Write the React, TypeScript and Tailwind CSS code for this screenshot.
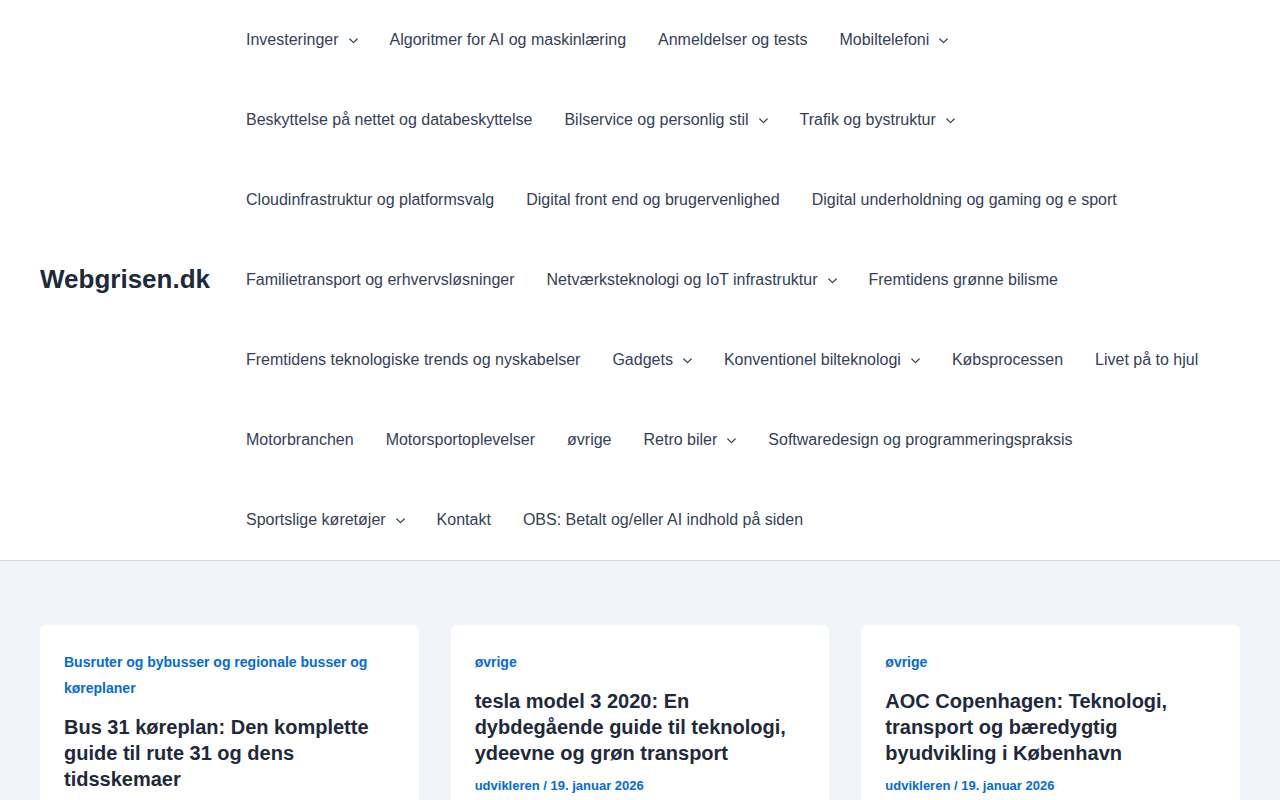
const NAV = [
  { label: 'Investeringer', sub: true },
  { label: 'Algoritmer for AI og maskinlæring' },
  { label: 'Anmeldelser og tests' },
  { label: 'Mobiltelefoni', sub: true },
  { label: 'Beskyttelse på nettet og databeskyttelse' },
  { label: 'Bilservice og personlig stil', sub: true },
  { label: 'Trafik og bystruktur', sub: true },
  { label: 'Cloudinfrastruktur og platformsvalg' },
  { label: 'Digital front end og brugervenlighed' },
  { label: 'Digital underholdning og gaming og e sport' },
  { label: 'Familietransport og erhvervsløsninger' },
  { label: 'Netværksteknologi og IoT infrastruktur', sub: true },
  { label: 'Fremtidens grønne bilisme' },
  { label: 'Fremtidens teknologiske trends og nyskabelser' },
  { label: 'Gadgets', sub: true },
  { label: 'Konventionel bilteknologi', sub: true },
  { label: 'Købsprocessen' },
  { label: 'Livet på to hjul' },
  { label: 'Motorbranchen' },
  { label: 'Motorsportoplevelser' },
  { label: 'øvrige' },
  { label: 'Retro biler', sub: true },
  { label: 'Softwaredesign og programmeringspraksis' },
  { label: 'Sportslige køretøjer', sub: true },
  { label: 'Kontakt' },
  { label: 'OBS: Betalt og/eller AI indhold på siden' },
]

const POSTS = [
  {
    cat: 'Busruter og bybusser og regionale busser og køreplaner',
    title: 'Bus 31 køreplan: Den komplette guide til rute 31 og dens tidsskemaer',
  },
  {
    cat: 'øvrige',
    title: 'tesla model 3 2020: En dybdegående guide til teknologi, ydeevne og grøn transport',
  },
  {
    cat: 'øvrige',
    title: 'AOC Copenhagen: Teknologi, transport og bæredygtig byudvikling i København',
  },
]

function Chevron() {
  return (
    <svg width="9" height="6" viewBox="0 0 9 6" className="ml-[10px] mt-[1px]" fill="none">
      <path d="M0.8 1l3.7 3.7L8.2 1" stroke="#334155" strokeWidth="1.2" strokeLinecap="round" strokeLinejoin="round" />
    </svg>
  )
}

export default function App() {
  return (
    <div className="min-h-screen bg-[#f0f5fa] font-['Liberation_Sans',Arial,sans-serif]">
      <header className="bg-white border-b border-[#d1d5db]">
        <div className="flex items-center px-10">
          <a className="text-[26px] font-bold text-[#1e293b] mr-5 leading-none whitespace-nowrap -mt-[2px]">Webgrisen.dk</a>
          <nav className="flex flex-wrap flex-1">
            {NAV.map((n) => (
              <a key={n.label} className="h-20 px-4 flex items-center text-base text-[#334155] whitespace-nowrap">
                {n.label}
                {n.sub && <Chevron />}
              </a>
            ))}
          </nav>
        </div>
      </header>

      <main className="px-10 pt-16">
        <div className="grid grid-cols-3 gap-8">
          {POSTS.map((p, i) => (
            <article key={i} className="bg-white rounded-md p-6">
              <p className="text-sm font-bold text-[#046bd2] leading-[26px]">{p.cat}</p>
              <h2 className="mt-[13px] text-xl font-bold text-[#1e293b] leading-[26px]">{p.title}</h2>
              {i > 0 && (
                <p className="mt-[10px] text-[13px] font-bold text-[#046bd2] leading-5">udvikleren / 19. januar 2026</p>
              )}
            </article>
          ))}
        </div>
      </main>
    </div>
  )
}
